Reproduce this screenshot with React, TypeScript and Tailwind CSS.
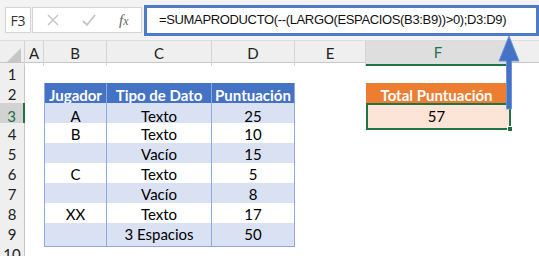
import React from "react"

const cols = ["A", "B", "C", "D", "E", "F"]

const rows = [
  { j: "A", t: "Texto", p: "25" },
  { j: "B", t: "Texto", p: "10" },
  { j: "", t: "Vacío", p: "15" },
  { j: "C", t: "Texto", p: "5" },
  { j: "", t: "Vacío", p: "8" },
  { j: "XX", t: "Texto", p: "17" },
  { j: "", t: "3 Espacios", p: "50" },
]

const grid = "grid grid-cols-[25px_19px_63px_105px_83px_71px_145px_1fr]"

function RowHead({ n, active }: { n: number; active?: boolean }) {
  return (
    <div
      className={
        active
          ? "flex items-center justify-center bg-[#d2d2d2] border-r-2 border-r-[#217346] border-b border-b-[#c6c6c6] text-[#217346]"
          : "flex items-center justify-center bg-[#efefef] border-r border-r-[#c6c6c6] border-b border-b-[#dadada] text-[#222]"
      }
    >
      {n}
    </div>
  )
}

export default function App() {
  return (
    <div className="relative w-[539px] h-[256px] overflow-hidden bg-white font-['Lato',sans-serif] text-[15px] text-black">
      {/* FORMULA BAR */}
      <div className="h-[41px] bg-[#f3f3f3] flex items-center pl-[5px] gap-[1px] border-b border-[#dcdcdc]">
        <div className="w-[26px] h-[26px] bg-white border border-[#d4d4d4] flex items-center justify-center text-[14px] font-['Open_Sans',sans-serif] text-[#333]">
          F3
        </div>
        <div className="w-[110px] h-[26px] bg-white border border-[#d4d4d4] flex items-center pl-[12px] gap-[20px] text-[#bdbdbd]">
          <svg width="16" height="16" viewBox="0 0 16 16">
            <path d="M3 3 L13 13 M13 3 L3 13" stroke="#c4c4c4" strokeWidth="1.4" />
          </svg>
          <svg width="16" height="16" viewBox="0 0 16 16">
            <path d="M2 9 L6 13 L14 3" stroke="#c4c4c4" strokeWidth="1.8" fill="none" />
          </svg>
          <span className="font-['Liberation_Serif',serif] italic text-[15px] text-[#666] pl-[2px]">
            f<span className="text-[12px]">x</span>
          </span>
        </div>
        <div className="ml-[1px] flex-1 h-[31px] border-[3px] border-[#4f7ac7] bg-white flex items-center pl-[12px] whitespace-nowrap overflow-hidden font-['Liberation_Sans',sans-serif] text-[13px] tracking-[-0.35px] text-[#111]">
          =SUMAPRODUCTO(--(LARGO(ESPACIOS(B3:B9))&gt;0);D3:D9)
        </div>
      </div>

      {/* COLUMN HEADERS */}
      <div className={`${grid} h-[22px] bg-[#efefef] border-b border-[#c6c6c6] text-[#222]`}>
        <div className="relative border-r border-[#d4d4d4]">
          <div className="absolute right-[3px] bottom-[3px] w-0 h-0 border-l-[15px] border-l-transparent border-b-[15px] border-b-[#c6c6c6]" />
        </div>
        {cols.map((c) => (
          <div
            key={c}
            className={
              c === "F"
                ? "flex items-center justify-center bg-[#dedede] border-r border-[#d4d4d4] border-b-2 border-b-[#217346] text-[#217346]"
                : "flex items-center justify-center border-r border-[#d4d4d4]"
            }
          >
            {c}
          </div>
        ))}
        <div />
      </div>

      {/* ROW 1 */}
      <div className={`${grid} h-[20px]`}>
        <RowHead n={1} />
      </div>

      {/* ROW 2 */}
      <div className={`${grid} h-[20px]`}>
        <RowHead n={2} />
        <div />
        <div className="bg-[#4472c4] text-white font-bold flex items-center justify-center border-l border-[#8ea9db] border-r border-r-[#8ea9db]">
          Jugador
        </div>
        <div className="bg-[#4472c4] text-white font-bold flex items-center justify-center border-r border-[#8ea9db]">
          Tipo de Dato
        </div>
        <div className="bg-[#4472c4] text-white font-bold flex items-center justify-center border-r border-[#8ea9db]">
          Puntuación
        </div>
        <div />
        <div className="bg-[#ed7d31] text-white font-bold flex items-center justify-center pr-[4px]">
          Total Puntuación
        </div>
        <div />
      </div>

      {/* ROWS 3-9 */}
      {rows.map((r, i) => {
        const band = i % 2 === 0 ? "bg-[#d9e1f2]" : "bg-white"
        return (
          <div key={i} className={`${grid} h-[20px]`}>
            <RowHead n={i + 3} active={i === 0} />
            <div />
            <div className={`${band} flex items-center justify-center border-l border-b border-r border-[#8ea9db]`}>
              {r.j}
            </div>
            <div className={`${band} flex items-center justify-center border-b border-r border-[#8ea9db]`}>
              {r.t}
            </div>
            <div className={`${band} flex items-center justify-center border-b border-r border-[#8ea9db]`}>
              {r.p}
            </div>
            <div />
            {i === 0 ? (
              <div className="relative bg-[#fce4d6] flex items-center justify-center border-2 border-[#217346] pr-[4px]">
                57
                <div className="absolute -right-[4px] -bottom-[4px] w-[6px] h-[6px] bg-[#217346] border border-white" />
              </div>
            ) : (
              <div />
            )}
            <div />
          </div>
        )
      })}

      {/* ROW 10 */}
      <div className={`${grid} h-[20px]`}>
        <RowHead n={10} />
      </div>

      {/* ARROW */}
      <svg className="absolute left-[496px] top-[35px]" width="26" height="76" viewBox="0 0 26 76">
        <path
          d="M13 1 L23 26 L15.5 26 L15.5 74 L10.5 74 L10.5 26 L3 26 Z"
          fill="#4472c4"
          stroke="#6f93d6"
          strokeWidth="1"
        />
      </svg>
    </div>
  )
}
